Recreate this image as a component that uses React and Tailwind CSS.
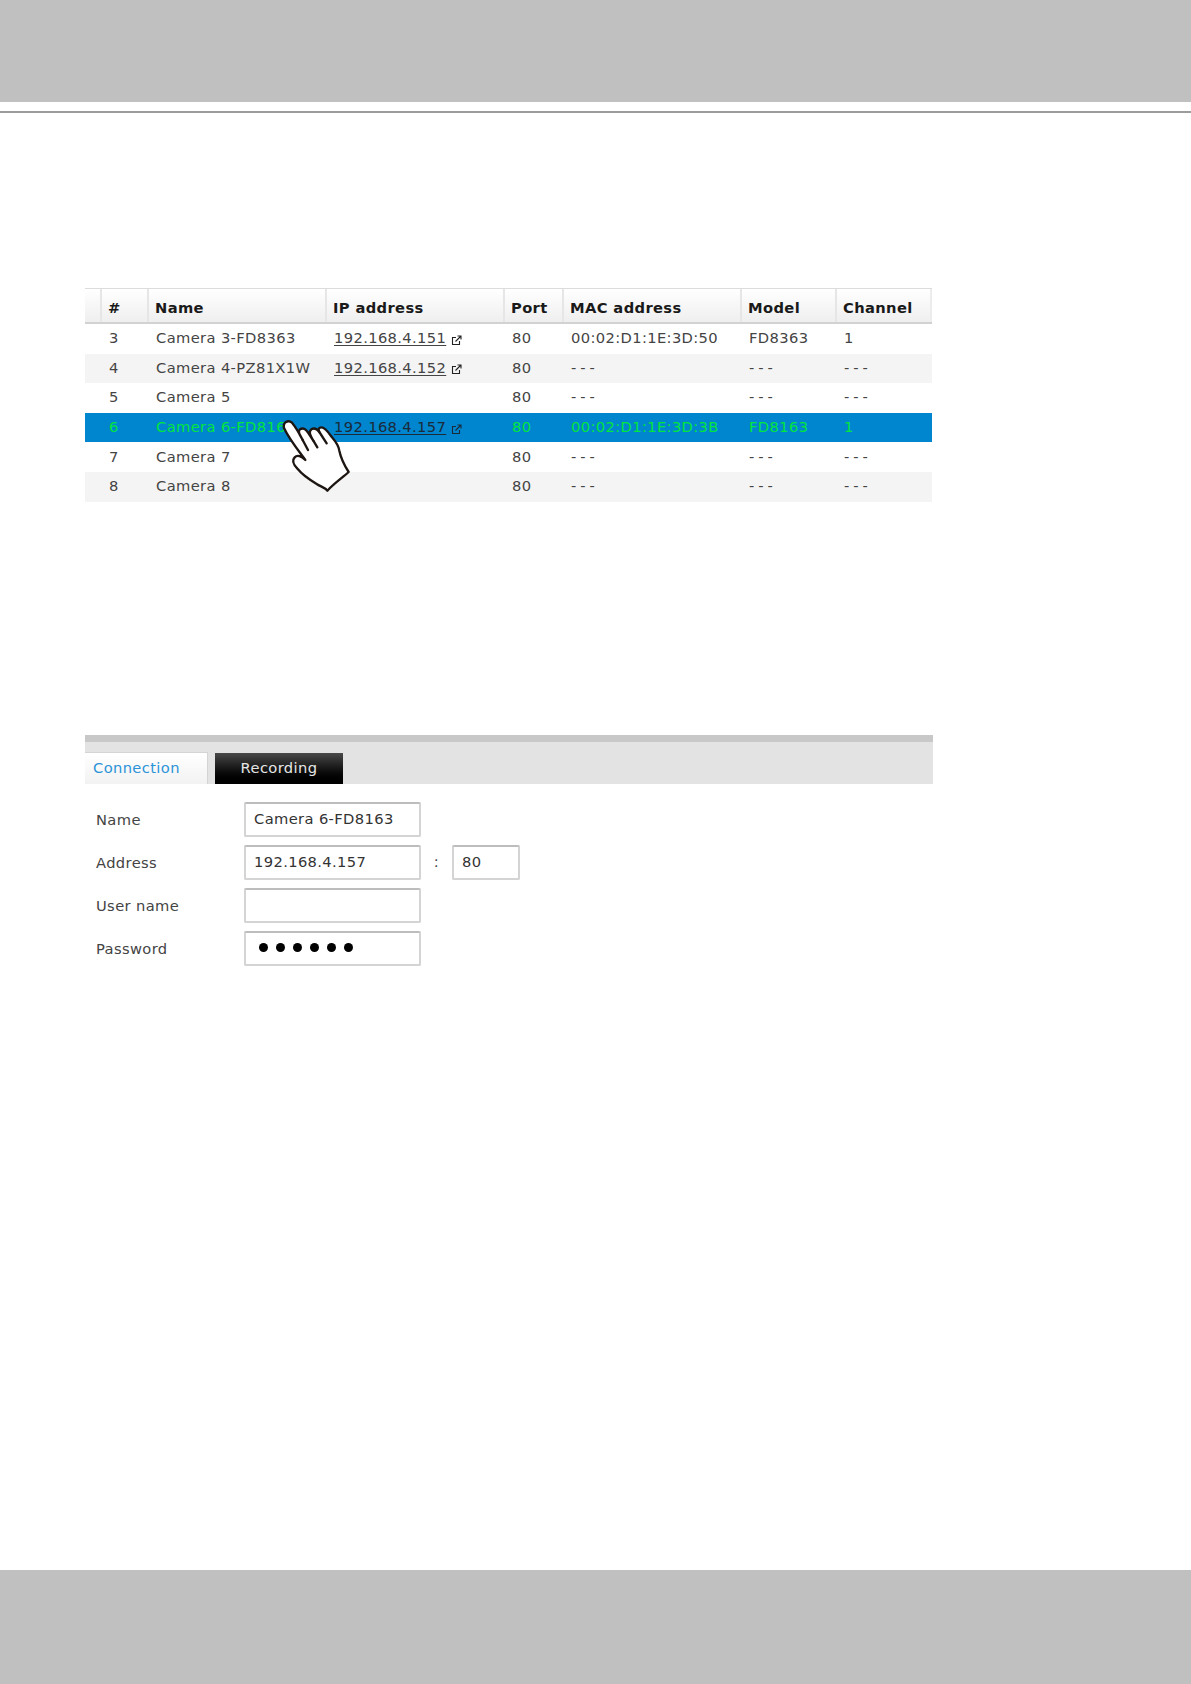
const font = "[font-family:'DejaVu_Sans',Verdana,sans-serif]";
const cols = 'grid grid-cols-[17px_47px_178px_178px_59px_178px_95px_95px]';
const txt = 'text-[14.7px] tracking-[0.37px]';

const headers = ['', '#', 'Name', 'IP address', 'Port', 'MAC address', 'Model', 'Channel'];
const rows = [
  ['3', 'Camera 3-FD8363', '192.168.4.151', '80', '00:02:D1:1E:3D:50', 'FD8363', '1'],
  ['4', 'Camera 4-PZ81X1W', '192.168.4.152', '80', '---', '---', '---'],
  ['5', 'Camera 5', '', '80', '---', '---', '---'],
  ['6', 'Camera 6-FD8163', '192.168.4.157', '80', '00:02:D1:1E:3D:3B', 'FD8163', '1'],
  ['7', 'Camera 7', '', '80', '---', '---', '---'],
  ['8', 'Camera 8', '', '80', '---', '---', '---'],
];

function LinkIcon({ dark }) {
  return (
    <svg width="11" height="11" viewBox="0 0 11 11" fill="none" stroke={dark ? '#1a2a38' : '#222'} strokeWidth="1.1" className="ml-[5px] mt-[4px] shrink-0">
      <path d="M5 2.5H1.5V9.5H8.5V6" />
      <path d="M4.5 6.5L9.5 1.5M6.5 1H10V4.5" />
    </svg>
  );
}

function Hand() {
  return (
    <svg width="100" height="100" viewBox="0 0 300 300" className="absolute left-[185px] top-[112px]">
      <path
        d="M42 84C38 68 54 58 66 68C76 80 88 100 98 120C92 106 80 96 90 88C100 82 108 88 114 98C120 106 124 114 130 122C122 108 114 96 124 88C134 82 142 88 148 96C144 88 146 82 154 82C166 82 176 98 186 112C198 126 206 138 208 152C212 172 222 194 236 216C216 234 192 250 172 272C164 262 152 260 140 252C120 240 98 226 84 208C72 196 64 182 74 172C82 164 94 168 106 180C84 150 58 118 42 84Z"
        fill="#fff"
        stroke="#1c1512"
        strokeWidth="7"
        strokeLinejoin="round"
      />
      <path d="M98 120L114 150M130 122L142 142M148 96L170 130" fill="none" stroke="#1c1512" strokeWidth="7" strokeLinecap="round" />
    </svg>
  );
}

function Field({ label, children, after }) {
  return (
    <div className="flex items-center h-[35px]">
      <div className={`w-[159px] pl-[11px] pt-[2px] ${txt} text-[#444]`}>{label}</div>
      <div className={`w-[177px] h-[35px] border-2 border-[#d4d4d4] border-t-[#bdbdbd] rounded-[2px] bg-white flex items-center pl-[8px] ${txt} text-[#333] pb-[1px]`}>{children}</div>
      {after}
    </div>
  );
}

export default function App() {
  return (
    <div className={`${font} w-[1191px] h-[1684px] bg-white flex flex-col relative overflow-hidden`}>
      <div className="h-[102px] bg-[#bfc0bf] shrink-0" />
      <div className="h-[2px] bg-[#9c9c9c] mt-[9px] shrink-0" />

      <div className="ml-[85px] mt-[175px] w-[847px] relative">
        <div className={`${cols} h-[36px] border-t border-[#dcdcdc] border-b-2 border-b-[#d2d2d2] bg-gradient-to-b from-white to-[#efefef]`}>
          {headers.map((h, i) => (
            <div key={i} className={`flex items-center pl-[6px] pt-[5px] ${txt} font-bold text-[#1a1a1a] border-r-2 ${i < 7 ? 'border-[#e6e6e6]' : 'border-[#ececec]'}`}>
              {h}
            </div>
          ))}
        </div>
        {rows.map((r, ri) => {
          const selected = ri === 3;
          const stripe = selected ? 'bg-[#0085cf] text-[#00e63c]' : ri % 2 === 1 ? 'bg-[#f4f4f4] text-[#444]' : 'bg-white text-[#444]';
          return (
            <div key={ri} className={`${cols} h-[29.6px] ${txt} ${stripe}`}>
              <div />
              {r.map((c, ci) => (
                <div key={ci} className="flex items-center pl-[7px] pb-[1px]">
                  {ci === 2 && c ? (
                    <>
                      <span className={`underline underline-offset-[2px] ${selected ? 'text-[#1a2a38]' : 'text-[#444]'}`}>{c}</span>
                      <LinkIcon dark={selected} />
                    </>
                  ) : c === '---' ? (
                    <span className="tracking-[4px]">{c}</span>
                  ) : (
                    c
                  )}
                </div>
              ))}
            </div>
          );
        })}
        <Hand />
      </div>

      <div className="ml-[85px] mt-[233.4px] w-[848px]">
        <div className="h-[7px] bg-[#c8c8c8]" />
        <div className="h-[42px] bg-[#e3e3e3] flex items-end">
          <div className={`w-[123px] h-[32px] bg-gradient-to-b from-white to-[#f2f2f2] border-t border-r border-[#d4d4d4] pl-[8px] flex items-center ${txt} text-[#2a93d8]`}>
            Connection
          </div>
          <div className={`ml-[7px] w-[128px] h-[31px] bg-gradient-to-b from-[#4a4a4a] to-black flex items-center justify-center ${txt} text-[#e6e6e6]`}>
            Recording
          </div>
        </div>
      </div>

      <div className="ml-[85px] mt-[18px] flex flex-col gap-[8px]">
        <Field label="Name">Camera 6-FD8163</Field>
        <Field
          label="Address"
          after={
            <div className="flex items-center">
              <span className={`w-[31px] text-center ${txt} text-[#444]`}>:</span>
              <div className={`w-[68px] h-[35px] border-2 border-[#d4d4d4] border-t-[#bdbdbd] rounded-[2px] flex items-center pl-[8px] ${txt} text-[#333] pb-[1px]`}>80</div>
            </div>
          }
        >
          192.168.4.157
        </Field>
        <Field label="User name" />
        <Field label="Password">
          <span className="flex gap-[8px] pl-[5px]">
            {[0, 1, 2, 3, 4, 5].map((i) => (
              <span key={i} className="w-[9px] h-[9px] rounded-full bg-black" />
            ))}
          </span>
        </Field>
      </div>

      <div className="mt-auto h-[114px] bg-[#bfc0bf] shrink-0" />
    </div>
  );
}
